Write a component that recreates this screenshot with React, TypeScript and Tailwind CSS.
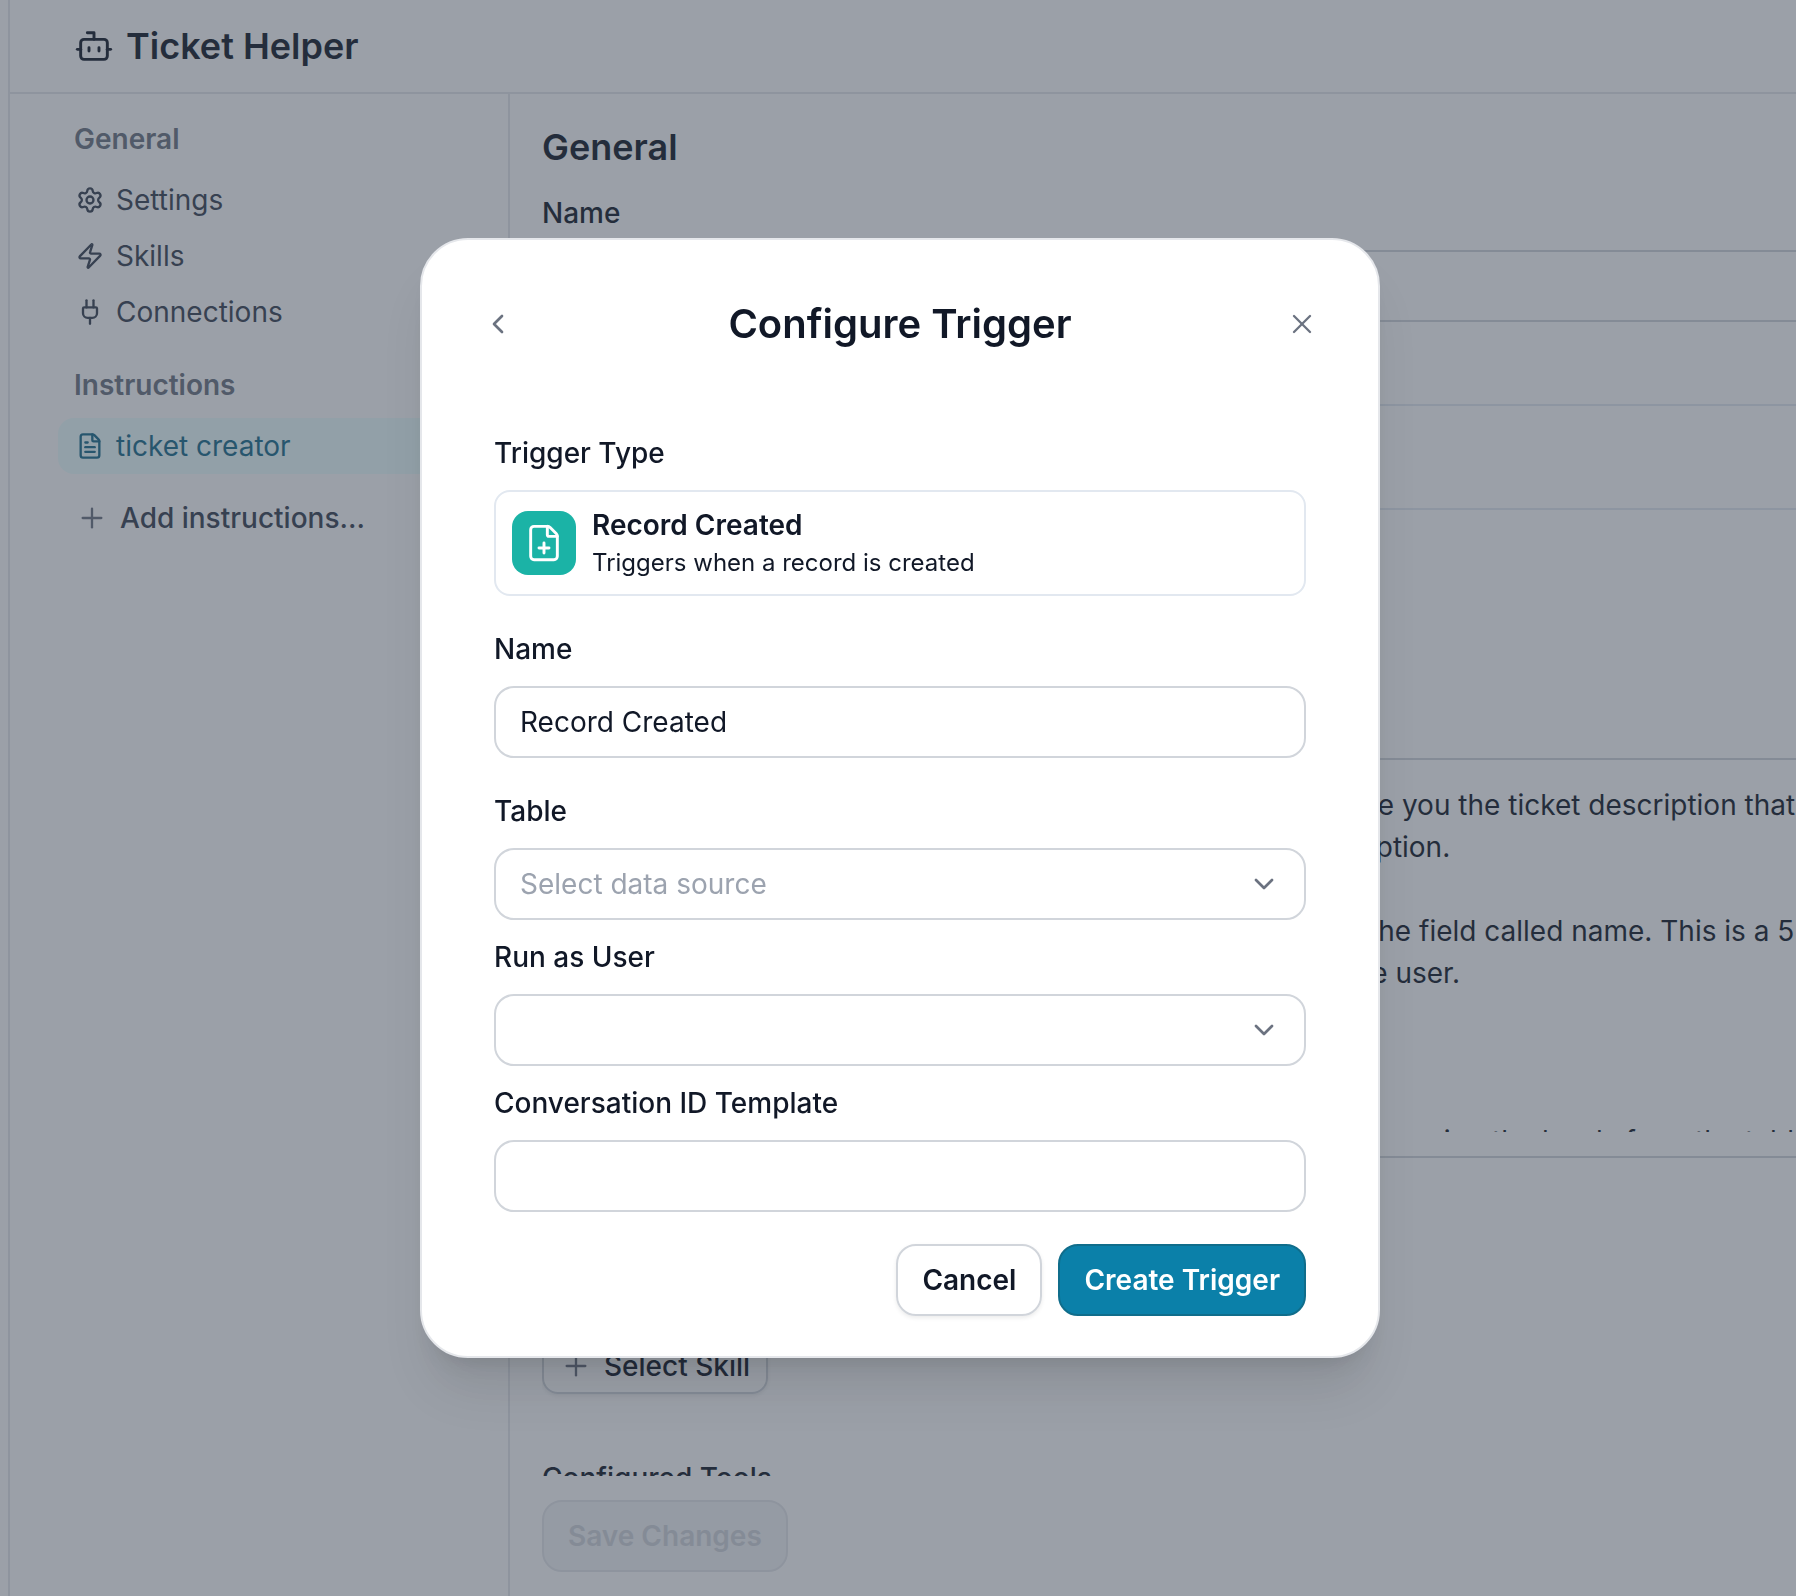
import type { ReactNode } from "react";
import {
  Bot,
  ChevronDown,
  ChevronLeft,
  FilePlus,
  FileText,
  Plug,
  Plus,
  Settings,
  X,
  Zap,
} from "lucide-react";

const prompt = [
  "You are a helpful support ticketing assistant. The user will give you the ticket description that",
  "they want to file. Create a ticket record from this ticket description.",
  "",
  "When creating the tickets, always make sure that you fill out the field called name. This is a 5",
  "to 10 word summary of the problem that was described by the user.",
  "",
  "Set the status to open.",
  "",
  "Set the priority of the new tickets to the option that fits the user using the levels from the table",
].join("\n");

function NavItem({
  icon,
  children,
  active = false,
}: {
  icon: ReactNode;
  children: ReactNode;
  active?: boolean;
}) {
  return (
    <a
      href="#"
      className={
        active
          ? "flex items-center gap-2.5 rounded-2xl bg-cyan-50 px-4 py-2 text-[#176a8a]"
          : "flex items-center gap-2.5 rounded-2xl px-4 py-2 text-[#374151]"
      }
    >
      <span className="flex size-8 items-center justify-center">{icon}</span>
      {children}
    </a>
  );
}

function Sidebar() {
  return (
    <nav className="w-[500px] shrink-0 border-r-2 border-[#e5e7eb] pt-[25px] pr-4 pl-12">
      <h2 className="px-4 font-semibold text-[#6b7280]">General</h2>
      <div className="mt-[13px]">
        <NavItem icon={<Settings size={28} strokeWidth={2} />}>Settings</NavItem>
        <NavItem icon={<Zap size={28} strokeWidth={2} />}>Skills</NavItem>
        <NavItem icon={<Plug size={28} strokeWidth={2} />}>Connections</NavItem>
      </div>
      <h2 className="mt-[25px] px-4 font-semibold text-[#6b7280]">Instructions</h2>
      <div className="mt-[13px]">
        <NavItem active icon={<FileText size={28} strokeWidth={2} />}>
          ticket creator
        </NavItem>
      </div>
      <button
        type="button"
        className="mt-4 flex items-center gap-3 px-[18px] py-2 font-medium text-[#374151]"
      >
        <Plus size={32} strokeWidth={1.75} className="text-[#6b7280]" />
        Add instructions...
      </button>
    </nav>
  );
}

function GeneralForm() {
  return (
    <main className="flex min-w-0 flex-1 flex-col overflow-hidden pl-8">
      <div className="-mr-8 flex-1 overflow-hidden pt-[33px]">
        <h2 className="text-4xl leading-10 font-semibold">General</h2>
        <label htmlFor="agent-name" className="mt-[26px] block font-medium">
          Name
        </label>
        <input
          id="agent-name"
          className="mt-[17px] block h-[72px] w-full rounded-[20px] border-2 border-[#d1d5db] px-6"
        />
        <h3 className="mt-[25px] font-medium">Triggers</h3>
        <div className="mt-[17px] h-[106px] rounded-2xl border-2 border-[#e2e8f0]" />
        <label htmlFor="agent-prompt" className="mt-[191px] block font-medium">
          Prompt
        </label>
        <div className="mt-[17px] h-[400px] rounded-[20px] border-2 border-[#d1d5db] p-6">
          <textarea
            id="agent-prompt"
            wrap="off"
            defaultValue={prompt}
            className="block h-full w-full resize-none overflow-hidden leading-[42px] outline-none"
          />
        </div>
        <h3 className="mt-[123px] font-medium">Skills</h3>
        <button
          type="button"
          className="mt-[17px] flex items-center gap-3 rounded-2xl border-2 border-[#d1d5db] px-4 py-1.5 font-medium shadow-[0_2px_4px_rgba(0,0,0,0.08)]"
        >
          <Plus size={32} strokeWidth={1.75} className="text-[#6b7280]" />
          Select Skill
        </button>
        <h3 className="mt-16 font-medium">Configured Tools</h3>
      </div>
      <div className="py-6">
        <button
          type="button"
          disabled
          className="rounded-[20px] border-2 border-[#e5e7eb] bg-[#f3f4f6] px-6 py-3.5 font-semibold text-[#d1d5db]"
        >
          Save Changes
        </button>
      </div>
    </main>
  );
}

function SelectField({
  id,
  label,
  placeholder,
  className,
}: {
  id: string;
  label: string;
  placeholder: string;
  className: string;
}) {
  return (
    <div className={className}>
      <label htmlFor={id} className="block font-medium">
        {label}
      </label>
      <div className="relative mt-[17px]">
        <select
          id={id}
          defaultValue=""
          className="block h-[72px] w-full appearance-none rounded-[20px] border-2 border-[#d1d5db] bg-white pr-16 pl-6 text-[#9ca3af]"
        >
          <option value="">{placeholder}</option>
        </select>
        <ChevronDown
          size={32}
          strokeWidth={2}
          className="pointer-events-none absolute top-5 right-[26px] text-[#6b7280]"
        />
      </div>
    </div>
  );
}

function TriggerDialog() {
  return (
    <div
      role="dialog"
      aria-modal="true"
      aria-labelledby="dialog-title"
      className="w-[960px] rounded-[48px] border-2 border-[#e5e7eb] bg-white px-[72px] pt-[60px] pb-10 shadow-[0_40px_50px_-10px_rgba(0,0,0,0.1),0_16px_20px_-12px_rgba(0,0,0,0.1)]"
    >
      <div className="-mx-3 flex items-center justify-between">
        <button type="button" aria-label="Back" className="text-[#6b7280]">
          <ChevronLeft size={32} strokeWidth={2} />
        </button>
        <h1 id="dialog-title" className="text-[40px] leading-[48px] font-semibold">
          Configure Trigger
        </h1>
        <button type="button" aria-label="Close" className="text-[#6b7280]">
          <X size={32} strokeWidth={1.75} />
        </button>
      </div>

      <form className="mt-[85px]">
        <h2 className="font-medium">Trigger Type</h2>
        <div className="mt-[17px] flex items-center gap-4 rounded-2xl border-2 border-[#e2e8f0] px-4 py-[13px]">
          <span className="flex size-16 items-center justify-center rounded-2xl bg-[#1bb3a6] text-white">
            <FilePlus size={40} strokeWidth={1.75} />
          </span>
          <div>
            <p className="font-semibold">Record Created</p>
            <p className="text-2xl leading-9">Triggers when a record is created</p>
          </div>
        </div>

        <label htmlFor="trigger-name" className="mt-[33px] block font-medium">
          Name
        </label>
        <input
          id="trigger-name"
          defaultValue="Record Created"
          className="mt-[17px] block h-[72px] w-full rounded-[20px] border-2 border-[#d1d5db] px-6"
        />

        <SelectField
          id="trigger-table"
          label="Table"
          placeholder="Select data source"
          className="mt-[33px]"
        />
        <SelectField id="trigger-user" label="Run as User" placeholder="" className="mt-[17px]" />

        <label htmlFor="trigger-template" className="mt-[17px] block font-medium">
          Conversation ID Template
        </label>
        <input
          id="trigger-template"
          className="mt-[17px] block h-[72px] w-full rounded-[20px] border-2 border-[#d1d5db] px-6"
        />

        <div className="mt-8 flex justify-end gap-4">
          <button
            type="button"
            className="rounded-[20px] border-2 border-[#d1d5db] px-6 py-3.5 font-semibold shadow-[0_2px_4px_rgba(0,0,0,0.08)]"
          >
            Cancel
          </button>
          <button
            type="button"
            className="rounded-[20px] border-2 border-[#106d8b] bg-[#0b80a9] px-6 py-3.5 font-semibold text-white"
          >
            Create Trigger
          </button>
        </div>
      </form>
    </div>
  );
}

export default function App() {
  return (
    <div className="h-screen overflow-hidden bg-white pl-2 font-['Inter',sans-serif] text-[28px] leading-10 text-[#111827]">
      <div className="flex h-full flex-col border-l-2 border-[#e5e7eb]">
        <header className="flex h-[94px] shrink-0 items-center gap-3 border-b-2 border-[#e5e7eb] pl-16">
          <Bot size={40} strokeWidth={1.75} />
          <h1 className="text-4xl leading-10 font-semibold">Ticket Helper</h1>
        </header>
        <div className="flex min-h-0 flex-1">
          <Sidebar />
          <GeneralForm />
        </div>
      </div>
      <div className="fixed inset-0 flex items-center justify-center bg-[#374151]/50 pl-1">
        <TriggerDialog />
      </div>
    </div>
  );
}
